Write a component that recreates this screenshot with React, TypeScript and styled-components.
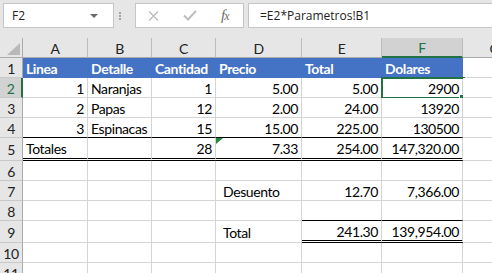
import styled, { createGlobalStyle } from "styled-components";

const GREEN = "#217346";
const GRID = "#d4d4d4";
const BLUE = "#4472c4";
const CHROME = "#e6e6e6";

const GlobalStyle = createGlobalStyle`
  html, body {
    margin: 0;
    padding: 0;
    background: #fff;
    overflow: hidden;
  }
  body {
    font-family: Lato, "Liberation Sans", sans-serif;
  }
`;

const Window = styled.div`
  width: 492px;
  height: 273px;
  overflow: hidden;
  background: #fff;
`;

const FormulaBar = styled.div`
  display: flex;
  align-items: flex-start;
  height: 38px;
  padding: 3px 0 0 3px;
  box-sizing: border-box;
  background: ${CHROME};
  font-family: "Open Sans", "Noto Sans", sans-serif;
  font-size: 12px;
  color: #222;
`;
const NameBox = styled.div`
  display: flex;
  align-items: center;
  justify-content: space-between;
  width: 111px;
  height: 25px;
  box-sizing: border-box;
  padding: 0 15px 0 8px;
  background: #fff;
  border: 1px solid #c6c6c6;
`;
const DropArrow = styled.span`
  width: 0;
  height: 0;
  border-left: 4px solid transparent;
  border-right: 4px solid transparent;
  border-top: 4px solid #6a6a6a;
`;
const Grip = styled.div`
  display: flex;
  flex-direction: column;
  gap: 1px;
  width: 21px;
  box-sizing: border-box;
  padding: 9px 0 0 5px;
`;
const GripDot = styled.span`
  width: 2px;
  height: 2px;
  background: #a3a3a3;
`;
const ButtonsBox = styled.div`
  display: flex;
  align-items: center;
  gap: 24px;
  width: 109px;
  height: 25px;
  box-sizing: border-box;
  padding-left: 12px;
  background: #fff;
  border: 1px solid #c6c6c6;
`;
const Fx = styled.span`
  font-family: "Liberation Serif", serif;
  font-style: italic;
  font-size: 15px;
  color: #6e6e6e;
  letter-spacing: -1px;
  sub {
    font-size: 12px;
    vertical-align: 0;
  }
`;
const FormulaInput = styled.div`
  flex: 1;
  display: flex;
  align-items: center;
  height: 25px;
  margin-left: 4px;
  box-sizing: border-box;
  padding-left: 11px;
  background: #fff;
  border: 1px solid #c6c6c6;
  border-right: none;
`;

const Sheet = styled.div`
  display: grid;
  grid-template-columns: 23px 65px 64px 64px 86px 80px 81px 64px;
  grid-template-rows: 20px 20px 20px 20px 20px 23px 20px 20px 20px 22px 20px 20px;
  font-size: 14px;
  line-height: 16px;
  letter-spacing: -0.4px;
`;
const Corner = styled.div`
  display: flex;
  align-items: flex-end;
  justify-content: flex-end;
  padding: 0 2px 2px 0;
  background: ${CHROME};
  border-right: 1px solid #ababab;
  border-bottom: 1px solid #ababab;
`;
const ColHeader = styled.div<{ $active?: boolean }>`
  display: flex;
  align-items: center;
  justify-content: center;
  box-sizing: border-box;
  padding-top: 2px;
  background: ${(p) => (p.$active ? "#d2d2d2" : CHROME)};
  color: ${(p) => (p.$active ? GREEN : "#222")};
  border-right: 1px solid #bcbcbc;
  border-bottom: ${(p) => (p.$active ? `2px solid ${GREEN}` : "1px solid #ababab")};
`;
const RowHeader = styled.div<{ $active?: boolean }>`
  display: flex;
  align-items: center;
  justify-content: center;
  box-sizing: border-box;
  padding-top: 2px;
  background: ${(p) => (p.$active ? "#d2d2d2" : CHROME)};
  color: ${(p) => (p.$active ? GREEN : "#222")};
  border-right: ${(p) => (p.$active ? `2px solid ${GREEN}` : "1px solid #ababab")};
  border-bottom: 1px solid #c8c8c8;
`;

type Edge = "grid" | "thin" | "double";

const Cell = styled.div<{
  $align?: "left" | "right";
  $fill?: boolean;
  $bold?: boolean;
  $bottom?: Edge;
  $indent?: boolean;
}>`
  position: relative;
  display: flex;
  align-items: center;
  justify-content: ${(p) => (p.$align === "right" ? "flex-end" : "flex-start")};
  box-sizing: border-box;
  padding: 2px 3px 0 ${(p) => (p.$indent ? "7px" : "3px")};
  white-space: nowrap;
  color: ${(p) => (p.$fill ? "#fff" : "#000")};
  font-weight: ${(p) => (p.$bold ? 700 : 400)};
  background: ${(p) => (p.$fill ? BLUE : "#fff")};
  border-right: 1px solid ${(p) => (p.$fill ? BLUE : GRID)};
  border-bottom: ${(p) =>
    p.$bottom === "double"
      ? "3px double #000"
      : p.$bottom === "thin"
      ? "1px solid #000"
      : `1px solid ${p.$fill ? BLUE : GRID}`};
`;

const Selection = styled.div`
  position: absolute;
  top: -1px;
  left: -1px;
  right: -3px;
  bottom: -2px;
  border: 2px solid ${GREEN};
  pointer-events: none;
`;
const FillHandle = styled.span`
  position: absolute;
  right: -3px;
  bottom: -4px;
  width: 5px;
  height: 5px;
  background: ${GREEN};
  border: 1px solid #fff;
`;
const ErrorMark = styled.span`
  position: absolute;
  top: 0;
  left: 0;
  width: 0;
  height: 0;
  border-top: 6px solid #1e8a3c;
  border-right: 7px solid transparent;
`;

type CellSpec = {
  v?: string;
  r?: boolean;
  b?: Edge;
  indent?: boolean;
  selected?: boolean;
  error?: boolean;
};

const header = ["Linea", "Detalle", "Cantidad", "Precio", "Total", "Dolares"];

const body: { n: number; cells: CellSpec[] }[] = [
  {
    n: 2,
    cells: [
      { v: "1", r: true },
      { v: "Naranjas" },
      { v: "1", r: true },
      { v: "5.00", r: true },
      { v: "5.00", r: true },
      { v: "2900", r: true, selected: true },
      {},
    ],
  },
  {
    n: 3,
    cells: [
      { v: "2", r: true },
      { v: "Papas" },
      { v: "12", r: true },
      { v: "2.00", r: true },
      { v: "24.00", r: true },
      { v: "13920", r: true },
      {},
    ],
  },
  {
    n: 4,
    cells: [
      { v: "3", r: true, b: "thin" },
      { v: "Espinacas", b: "thin" },
      { v: "15", r: true, b: "thin" },
      { v: "15.00", r: true, b: "thin" },
      { v: "225.00", r: true, b: "thin" },
      { v: "130500", r: true, b: "thin" },
      {},
    ],
  },
  {
    n: 5,
    cells: [
      { v: "Totales", b: "double" },
      { b: "double" },
      { v: "28", r: true, b: "double" },
      { v: "7.33", r: true, b: "double", error: true },
      { v: "254.00", r: true, b: "double" },
      { v: "147,320.00", r: true, b: "double" },
      {},
    ],
  },
  { n: 6, cells: [{}, {}, {}, {}, {}, {}, {}] },
  {
    n: 7,
    cells: [
      {},
      {},
      {},
      { v: "Desuento", indent: true },
      { v: "12.70", r: true },
      { v: "7,366.00", r: true },
      {},
    ],
  },
  { n: 8, cells: [{}, {}, {}, {}, { b: "thin" }, { b: "thin" }, {}] },
  {
    n: 9,
    cells: [
      {},
      {},
      {},
      { v: "Total", indent: true },
      { v: "241.30", r: true, b: "double" },
      { v: "139,954.00", r: true, b: "double" },
      {},
    ],
  },
  { n: 10, cells: [{}, {}, {}, {}, {}, {}, {}] },
  { n: 11, cells: [{}, {}, {}, {}, {}, {}, {}] },
];

function FormulaBarView() {
  return (
    <FormulaBar>
      <NameBox>
        F2
        <DropArrow />
      </NameBox>
      <Grip>
        <GripDot />
        <GripDot />
        <GripDot />
      </Grip>
      <ButtonsBox>
        <svg width="11" height="10" viewBox="0 0 11 10">
          <path d="M1 0.5 L10 9.5 M10 0.5 L1 9.5" stroke="#bdbdbd" strokeWidth="1.4" fill="none" />
        </svg>
        <svg width="14" height="11" viewBox="0 0 14 11">
          <path d="M1 5.5 L5 9.5 L13 1" stroke="#bdbdbd" strokeWidth="2" fill="none" />
        </svg>
        <Fx>
          f<sub>x</sub>
        </Fx>
      </ButtonsBox>
      <FormulaInput>=E2*Parametros!B1</FormulaInput>
    </FormulaBar>
  );
}

export default function App() {
  return (
    <Window>
      <GlobalStyle />
      <FormulaBarView />
      <Sheet>
        <Corner>
          <svg width="13" height="12" viewBox="0 0 13 12">
            <polygon points="13,0 13,12 0,12" fill="#b9b9b9" />
          </svg>
        </Corner>
        {["A", "B", "C", "D", "E", "F", "G"].map((c) => (
          <ColHeader key={c} $active={c === "F"}>
            {c}
          </ColHeader>
        ))}

        <RowHeader>1</RowHeader>
        {header.map((h) => (
          <Cell key={h} $fill $bold>
            {h}
          </Cell>
        ))}
        <Cell />

        {body.map((row) => [
          <RowHeader key={`h${row.n}`} $active={row.n === 2}>
            {row.n}
          </RowHeader>,
          ...row.cells.map((c, i) => (
            <Cell
              key={`${row.n}-${i}`}
              $align={c.r ? "right" : "left"}
              $bottom={c.b ?? "grid"}
              $indent={c.indent}
            >
              {c.v}
              {c.error && <ErrorMark />}
              {c.selected && (
                <Selection>
                  <FillHandle />
                </Selection>
              )}
            </Cell>
          )),
        ])}
      </Sheet>
    </Window>
  );
}
